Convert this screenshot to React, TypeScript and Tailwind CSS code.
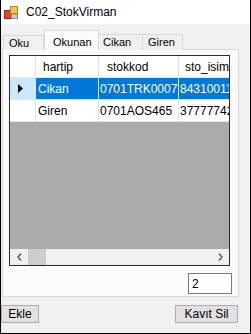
import React from 'react';

const rows = [
  { hartip: 'Cikan', stokkod: '0701TRK0007', isim: '84310011', selected: true },
  { hartip: 'Giren', stokkod: '0701AOS465', isim: '37777742', selected: false },
];

function AppIcon() {
  return (
    <svg width="14" height="13" viewBox="0 0 14 13">
      <rect x="0.5" y="4.5" width="7" height="8" fill="#e0442c" stroke="#9c2a18" />
      <rect x="6.5" y="0.5" width="7" height="7" fill="#f5c93a" stroke="#b08a18" />
      <rect x="7.5" y="8" width="6" height="4.5" fill="#c9c9c9" stroke="#8a8a8a" />
    </svg>
  );
}

export default function App() {
  return (
    <div
      className="w-[251px] h-[334px] flex flex-col bg-[#f0f0f0] border-x border-b border-black text-[12px] text-black"
      style={{ fontFamily: '"Liberation Sans", Arial, sans-serif' }}
    >
      {/* Title bar */}
      <div className="h-[24px] bg-white flex items-center pl-[3px] gap-[8px] shrink-0">
        <AppIcon />
        <span className="text-[12px] leading-none">C02_StokVirman</span>
      </div>

      {/* Tab control */}
      <div className="flex flex-col ml-[1px] mr-[11px] mt-[6px]">
        <div className="flex items-end h-[20px] pl-[1px] -mb-px relative z-10 text-[11px]">
          <div className="w-[41px] h-[15px] border border-[#d9d9d9] border-b-0 bg-[#f0f0f0] flex items-center pl-[5px]">
            Oku
          </div>
          <div className="w-[55px] h-[20px] border border-[#d9d9d9] border-b-0 bg-[#fbfbfb] flex items-start pt-[3px] pl-[8px]">
            Okunan
          </div>
          <div className="w-[44px] h-[16px] border border-[#d9d9d9] border-b-0 border-l-0 bg-[#f0f0f0] flex items-center pl-[4px]">
            Cikan
          </div>
          <div className="w-[40px] h-[16px] border border-[#d9d9d9] border-b-0 border-l-0 bg-[#f0f0f0] flex items-center pl-[5px]">
            Giren
          </div>
        </div>

        <div className="h-[248px] border border-[#d9d9d9] bg-[#fbfbfb] flex flex-col pl-[6px] pt-[5px]">
          {/* DataGridView */}
          <div className="h-[211px] mr-[8px] border border-[#2b2b2b] flex flex-col overflow-hidden">
            <div className="flex h-[22px] shrink-0 bg-white border-b border-[#e5e5e5]">
              <div className="w-[26px] shrink-0 border-r border-[#e5e5e5]" />
              <div className="w-[63px] shrink-0 border-r border-[#e5e5e5] pl-[7px] flex items-center">hartip</div>
              <div className="w-[80px] shrink-0 border-r border-[#e5e5e5] pl-[8px] flex items-center">stokkod</div>
              <div className="w-[60px] shrink-0 pl-[6px] flex items-center whitespace-nowrap">sto_isim</div>
            </div>
            {rows.map((r) => (
              <div key={r.hartip} className="flex h-[22px] shrink-0 border-b border-[#e5e5e5]">
                <div
                  className={`w-[26px] shrink-0 border-r border-[#e5e5e5] flex items-center pl-[8px] ${
                    r.selected ? 'bg-[#cce8ff]' : 'bg-white'
                  }`}
                >
                  {r.selected && (
                    <svg width="5" height="9" viewBox="0 0 5 9">
                      <path d="M0 0 L5 4.5 L0 9 Z" fill="#000" />
                    </svg>
                  )}
                </div>
                <div
                  className={`w-[63px] shrink-0 border-r pl-[2px] flex items-center ${
                    r.selected ? 'bg-[#0078d7] text-white border-[#e5e5e5]' : 'bg-white border-[#e5e5e5]'
                  }`}
                >
                  {r.hartip}
                </div>
                <div
                  className={`w-[80px] shrink-0 border-r pl-[1px] flex items-center whitespace-nowrap ${
                    r.selected ? 'bg-[#0078d7] text-white border-[#e5e5e5]' : 'bg-white border-[#e5e5e5]'
                  }`}
                >
                  {r.stokkod}
                </div>
                <div
                  className={`w-[60px] shrink-0 pl-[1px] flex items-center whitespace-nowrap ${
                    r.selected ? 'bg-[#0078d7] text-white' : 'bg-white'
                  }`}
                >
                  {r.isim}
                </div>
              </div>
            ))}
            <div className="flex-1 bg-[#ababab]" />
            {/* Horizontal scrollbar */}
            <div className="h-[16px] shrink-0 bg-[#f0f0f0] flex items-stretch">
              <div className="w-[18px] flex items-center justify-center">
                <svg width="5" height="8" viewBox="0 0 5 8">
                  <path d="M4 0.5 L1 4 L4 7.5" fill="none" stroke="#606060" strokeWidth="1.6" />
                </svg>
              </div>
              <div className="w-[18px] bg-[#cdcdcd]" />
              <div className="flex-1" />
              <div className="w-[17px] flex items-center justify-center">
                <svg width="5" height="8" viewBox="0 0 5 8">
                  <path d="M1 0.5 L4 4 L1 7.5" fill="none" stroke="#606060" strokeWidth="1.6" />
                </svg>
              </div>
            </div>
          </div>

          <div className="flex justify-end mt-[7px] pr-[6px]">
            <div className="w-[44px] h-[21px] bg-white border border-[#7a7a7a] pl-[3px] flex items-center">2</div>
          </div>
        </div>
      </div>

      {/* Buttons */}
      <div className="flex justify-between mt-[8px] pr-[12px]">
        <button className="w-[38px] h-[18px] bg-[#e1e1e1] border border-[#adadad] flex items-center justify-center text-[12px]">
          Ekle
        </button>
        <button className="w-[63px] h-[18px] bg-[#e1e1e1] border border-[#adadad] flex items-center justify-center text-[12px]">
          Kavıt Sil
        </button>
      </div>
    </div>
  );
}
